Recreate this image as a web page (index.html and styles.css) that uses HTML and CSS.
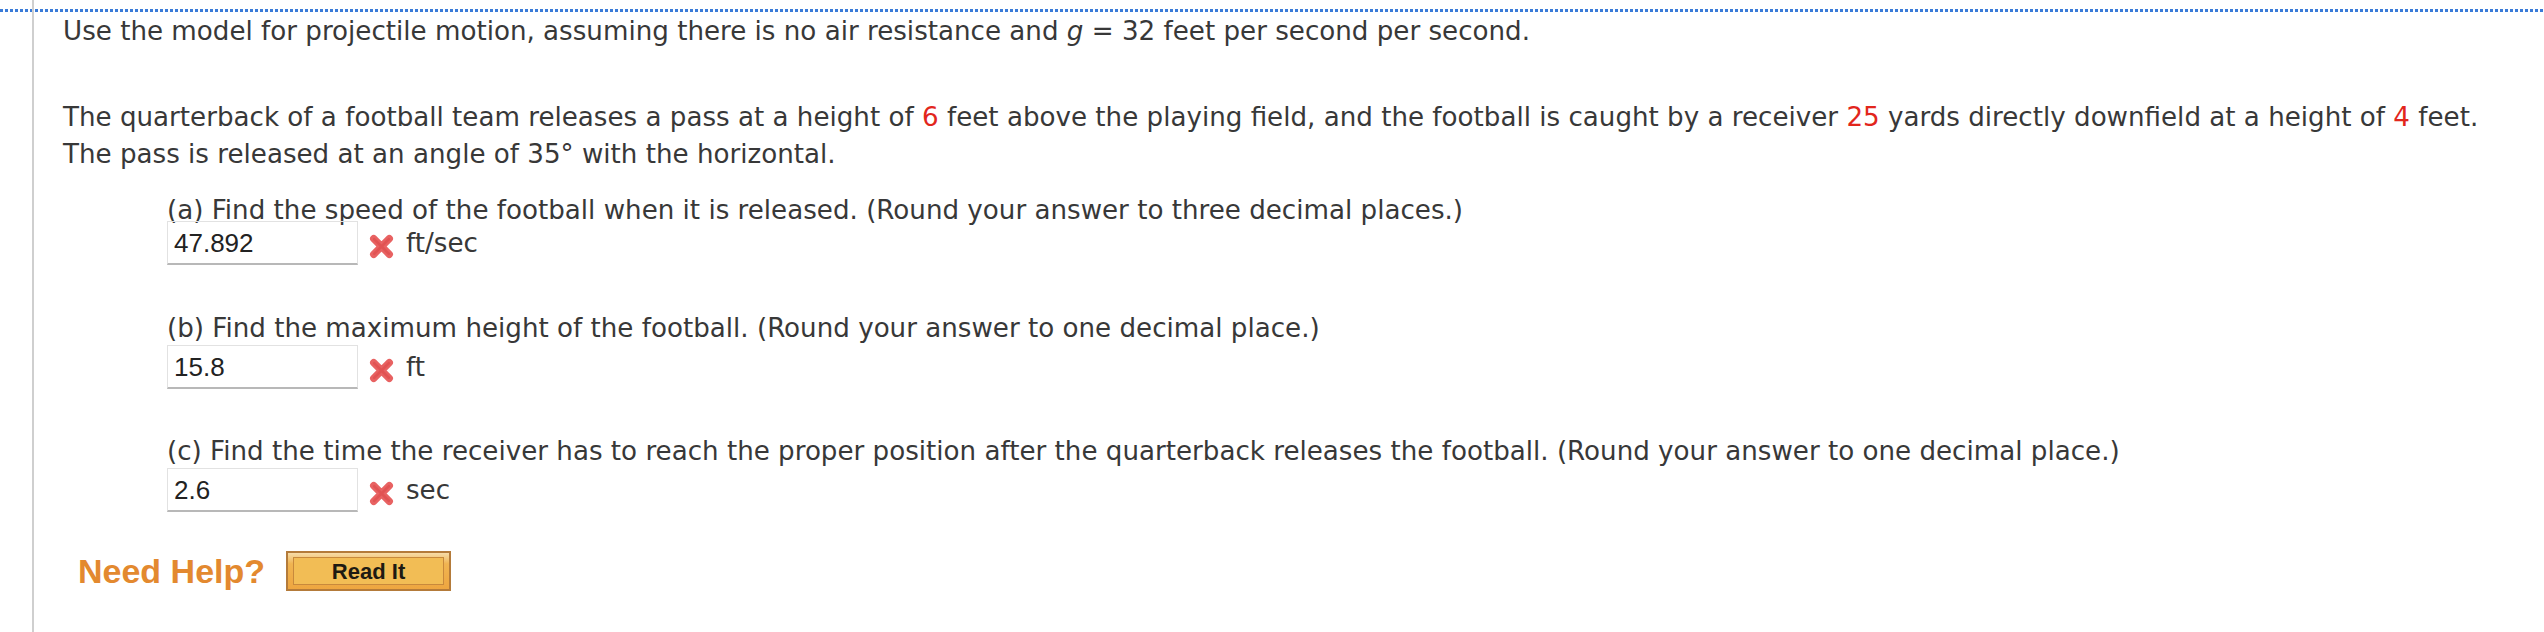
FILE: index.html
```html
<!DOCTYPE html>
<html>
<head>
<meta charset="utf-8">
<link rel="stylesheet" href="styles.css">
</head>
<body>
<div class="frame">
  <p class="intro">Use the model for projectile motion, assuming there is no air resistance and <i>g</i>&nbsp;=&nbsp;32 feet per second per second.</p>
  <p class="problem">The quarterback of a football team releases a pass at a height of <span class="red">6</span> feet above the playing field, and the football is caught by a receiver <span class="red">25</span> yards directly downfield at a height of <span class="red">4</span> feet.<br>The pass is released at an angle of 35° with the horizontal.</p>

  <div class="part part-a">
    <p class="q">(a) Find the speed of the football when it is released. (Round your answer to three decimal places.)</p>
    <div class="answer">
      <span class="input">47.892</span>
      <svg class="wrong" viewBox="0 0 24 24" width="24" height="24" aria-hidden="true"><path d="M4.5 4.5 L19.5 19.5 M19.5 4.5 L4.5 19.5" stroke="#e86262" stroke-width="7" stroke-linecap="round" fill="none"/><path d="M5 5 L19 19 M19 5 L5 19" stroke="#d94444" stroke-width="2.5" stroke-linecap="round" fill="none" opacity="0.5"/></svg>
      <span class="unit">ft/sec</span>
    </div>
  </div>

  <div class="part part-b">
    <p class="q">(b) Find the maximum height of the football. (Round your answer to one decimal place.)</p>
    <div class="answer answer-low">
      <span class="input">15.8</span>
      <svg class="wrong" viewBox="0 0 24 24" width="24" height="24" aria-hidden="true"><path d="M4.5 4.5 L19.5 19.5 M19.5 4.5 L4.5 19.5" stroke="#e86262" stroke-width="7" stroke-linecap="round" fill="none"/><path d="M5 5 L19 19 M19 5 L5 19" stroke="#d94444" stroke-width="2.5" stroke-linecap="round" fill="none" opacity="0.5"/></svg>
      <span class="unit">ft</span>
    </div>
  </div>

  <div class="part part-c">
    <p class="q">(c) Find the time the receiver has to reach the proper position after the quarterback releases the football. (Round your answer to one decimal place.)</p>
    <div class="answer answer-low">
      <span class="input">2.6</span>
      <svg class="wrong" viewBox="0 0 24 24" width="24" height="24" aria-hidden="true"><path d="M4.5 4.5 L19.5 19.5 M19.5 4.5 L4.5 19.5" stroke="#e86262" stroke-width="7" stroke-linecap="round" fill="none"/><path d="M5 5 L19 19 M19 5 L5 19" stroke="#d94444" stroke-width="2.5" stroke-linecap="round" fill="none" opacity="0.5"/></svg>
      <span class="unit">sec</span>
    </div>
  </div>

  <div class="help">
    <span class="need">Need Help?</span>
    <span class="btn"><span class="btn-inner">Read It</span></span>
  </div>
</div>
</body>
</html>
```

FILE: styles.css
```css
html, body {
  margin: 0;
  padding: 0;
  background: #fff;
}
body {
  min-height: 632px;
  background-image: repeating-linear-gradient(90deg, #3a7bd8 0 3px, transparent 3px 5px);
  background-size: 100% 3px;
  background-position: 0 9px;
  background-repeat: no-repeat;
  font-family: "DejaVu Sans", Verdana, sans-serif;
  color: #383838;
}
.frame {
  margin-left: 32px;
  border-left: 2px solid #cfcfcf;
  min-height: 632px;
  padding-left: 29px;
  padding-top: 13px;
  box-sizing: border-box;
  font-size: 26.15px;
  line-height: 37px;
}
p { margin: 0; }
.intro { margin-bottom: 49px; }
.red { color: #e2261c; }
.part { padding-left: 104px; }
.part-a { margin-top: 21px; }
.part-b { margin-top: 47px; }
.part-c { margin-top: 46px; }
.q { line-height: 32px; }
.answer {
  display: flex;
  align-items: center;
  margin-top: -5px;
}
.answer-low { margin-top: 1px; }
.input {
  display: block;
  width: 191px;
  height: 44px;
  box-sizing: border-box;
  border: 1px solid #e2e2e2;
  border-bottom: 2px solid #b8b8b8;
  padding: 6px 0 0 6px;
  font-family: "Liberation Sans", Arial, sans-serif;
  font-size: 26px;
  line-height: 30px;
  color: #222;
}
.wrong {
  margin-left: 11px;
  margin-top: 7px;
  width: 25px;
  height: 25px;
}
.unit {
  margin-left: 12px;
}
.help {
  display: flex;
  align-items: center;
  margin-top: 39px;
  padding-left: 15px;
}
.need {
  font-family: "Liberation Sans", Arial, sans-serif;
  font-weight: bold;
  font-size: 34px;
  color: #e3892f;
}
.btn {
  margin-left: 21px;
  display: block;
  width: 165px;
  height: 40px;
  box-sizing: border-box;
  border: 2px solid #b47b3a;
  background: linear-gradient(#f7dca8, #f0b451 30%, #eea640);
  padding: 4px 5px;
}
.btn-inner {
  display: flex;
  align-items: center;
  justify-content: center;
  height: 100%;
  box-sizing: border-box;
  border: 1px solid #c8893c;
  background: #f2bd55;
  font-family: "Liberation Sans", Arial, sans-serif;
  font-weight: bold;
  font-size: 22px;
  color: #1e1a12;
}
```
